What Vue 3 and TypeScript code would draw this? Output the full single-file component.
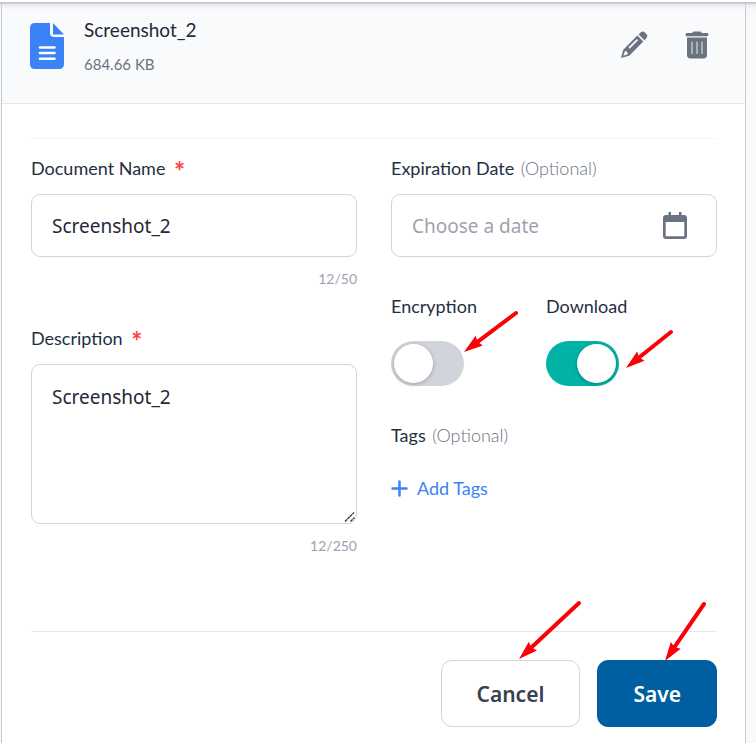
<script setup lang="ts">
import { computed, ref } from 'vue'

interface Arrow {
  from: [number, number]
  to: [number, number]
}

const fileName = 'Screenshot_2'
const fileSize = '684.66 KB'
const documentName = ref(fileName)
const description = ref(fileName)
const expiration = ref('')
const encryption = ref(false)
const download = ref(true)

const arrows: Arrow[] = [
  { from: [516, 313], to: [464, 352] },
  { from: [671, 332], to: [626, 368] },
  { from: [579, 603], to: [519, 659] },
  { from: [704, 604], to: [665, 661] },
]

// Each arrow is drawn pointing left from its tip, then rotated into place.
const drawnArrows = computed(() =>
  arrows.map(({ from, to }) => {
    const dx = from[0] - to[0]
    const dy = from[1] - to[1]
    return {
      length: Math.hypot(dx, dy),
      transform: `translate(${to[0]} ${to[1]}) rotate(${(Math.atan2(dy, dx) * 180) / Math.PI})`,
    }
  }),
)
</script>

<template>
  <div class="page">
    <form class="card" @submit.prevent>
      <header class="file">
        <svg class="file-icon" viewBox="0 0 34 46" aria-hidden="true">
          <path fill="#3b82f6" d="M5 0H20V10Q20 14 24 14H34V41Q34 46 29 46H5Q0 46 0 41V5Q0 0 5 0Z" />
          <path fill="#3b82f6" d="M23 0L34 11.500H23Z" />
          <path stroke="#fff" stroke-width="2.600" stroke-linecap="round" d="M10 24.500H24.500M10 30H24.500M10 35.700H24.500" />
        </svg>
        <div class="file-text">
          <h1>{{ fileName }}</h1>
          <p>{{ fileSize }}</p>
        </div>
        <button type="button" class="icon-button" aria-label="Edit">
          <svg width="28" height="28" viewBox="0 0 28 28" aria-hidden="true">
            <path fill="#6b7280" d="M18.600 3.400L20.600 1.500Q22.800 -.4 25 1.600L26.300 2.900Q28.300 5.100 26.300 7.300L24.500 9.200ZM17.300 4.600L23.300 10.600L10 23.900Q9.200 24.700 8.100 25L1 27L2.900 19.900Q3.200 18.800 4 18Z" />
            <path fill="#f9fafb" d="M3.400 24.700L4.900 20.200L6.800 20.600L7.200 21.200L7.900 23.300Z" />
            <path stroke="#f9fafb" stroke-width="1.800" stroke-linecap="round" d="M9.500 16.600L17 9.200" />
          </svg>
        </button>
        <button type="button" class="icon-button" aria-label="Delete">
          <svg width="24" height="28" viewBox="0 0 24 28" aria-hidden="true">
            <path fill="#6b7280" d="M7.500 1.400Q8 .5 9 .5H15Q16 .5 16.500 1.400L17 2H22Q23.500 2 23.500 3.600T22 5.300H2Q.5 5.300 .5 3.700T2 2H7ZM2 6.500H22V23.700Q22 27.500 18.500 27.500H5.500Q2 27.500 2 23.700Z" />
            <path stroke="#d5d8dd" stroke-width="1.200" stroke-linecap="round" d="M7 11V22.500M12 11V22.500M17 11V22.500" />
          </svg>
        </button>
      </header>

      <div class="body">
        <div class="columns">
          <div class="column">
            <div>
              <label class="label" for="name">Document Name <span class="required">*</span></label>
              <input id="name" v-model="documentName" class="control" type="text" maxlength="50" />
              <p class="counter">{{ documentName.length }}/50</p>
            </div>
            <div>
              <label class="label" for="description">Description <span class="required">*</span></label>
              <div class="area">
                <textarea id="description" v-model="description" class="control" maxlength="250"></textarea>
                <svg class="grip" viewBox="0 0 12 12" aria-hidden="true">
                  <path stroke="#444" stroke-width="1.500" stroke-dasharray="3 .5" d="M1 10.500L10 1.500M6.500 10.500L10.500 6.500" />
                </svg>
              </div>
              <p class="counter">{{ description.length }}/250</p>
            </div>
          </div>

          <div class="column">
            <div>
              <label class="label" for="expiration">Expiration Date <span class="optional">(Optional)</span></label>
              <div class="control date">
                <input id="expiration" v-model="expiration" type="text" placeholder="Choose a date" />
                <button type="button" aria-label="Open calendar">
                  <svg width="24" height="27" viewBox="0 0 24 27" aria-hidden="true">
                    <path fill="#6b7280" fill-rule="evenodd" d="M5.500 0H8V3H16V0H18.500V3H21Q24 3 24 6V24Q24 27 21 27H3Q0 27 0 24V6Q0 3 3 3H5.500ZM2.700 10V24.300H21.300V10Z" />
                  </svg>
                </button>
              </div>
            </div>
            <div class="switches">
              <div>
                <label class="label" for="encryption">Encryption</label>
                <input id="encryption" v-model="encryption" class="switch" type="checkbox" role="switch" />
              </div>
              <div>
                <label class="label" for="download">Download</label>
                <input id="download" v-model="download" class="switch" type="checkbox" role="switch" />
              </div>
            </div>
            <div>
              <h2 class="label">Tags <span class="optional">(Optional)</span></h2>
              <button type="button" class="add">
                <svg width="17" height="17" viewBox="0 0 17 17" aria-hidden="true">
                  <path stroke="#3b82f6" stroke-width="2.500" stroke-linecap="round" d="M8.500 1.500V15.500M1.500 8.500H15.500" />
                </svg>
                Add Tags
              </button>
            </div>
          </div>
        </div>

        <footer class="actions">
          <button type="button" class="button">Cancel</button>
          <button type="submit" class="button primary">Save</button>
        </footer>
      </div>
    </form>

    <svg class="arrows" width="756" height="743" aria-hidden="true">
      <g v-for="(arrow, i) in drawnArrows" :key="i" :transform="arrow.transform">
        <line x1="14" y1="0" :x2="arrow.length" y2="0" stroke="#fb0007" stroke-width="4" stroke-linecap="round" />
        <path fill="#fb0007" d="M0 0L19 -6L17 0L19 6Z" />
      </g>
    </svg>
  </div>
</template>

<style>
body {
  margin: 0;
  background: #f9f9fa;
}
</style>

<style scoped>
.page {
  position: relative;
  box-sizing: border-box;
  min-height: 100vh;
  overflow: hidden;
  padding: 2px 10px 0 1px;
  background: #f9f9fa;
  font-family: Lato, "Liberation Sans", sans-serif;
  font-size: 18px;
  color: #1f2937;
}

/* Shadow cast by the edge above the card */
.page::before {
  content: "";
  position: absolute;
  inset: 0 0 auto;
  height: 10px;
  background: linear-gradient(#fff 2px, #babcc0 2px, rgba(220, 222, 226, 0.5) 5px, rgba(249, 250, 251, 0));
}

.card {
  box-sizing: border-box;
  min-height: calc(100vh - 2px);
  border: solid #c6ccd5;
  border-width: 0 1px;
  background: #fff;
}

h1,
h2,
p {
  margin: 0;
  font-weight: 400;
}

button {
  padding: 0;
  border: 0;
  background: none;
  font: inherit;
  cursor: pointer;
}

svg {
  display: block;
  fill: none;
}

.file {
  display: flex;
  align-items: flex-start;
  padding: 14px 36px 25px 28px;
  border-bottom: 1px solid #e2e5ea;
  background: #f9fafc;
}

.file-icon {
  width: 34px;
  height: 46px;
  margin-top: 7px;
}

.file-text {
  flex: 1;
  margin-left: 20px;
}

.file-text h1 {
  font-size: 19px;
  line-height: 28px;
}

.file-text p {
  margin-top: 7px;
  font-size: 15px;
  line-height: 27px;
  color: #6b7280;
}

.icon-button {
  margin: 15px 0 0 37px;
}

.body {
  padding: 34px 28px 17px 29px;
}

.columns {
  display: grid;
  grid-template-columns: repeat(2, minmax(0, 1fr));
  gap: 34px;
  padding: 15px 0 75px;
  border-top: 1px solid #f5f6f7;
}

.column {
  display: flex;
  flex-direction: column;
  gap: 35px;
}

.label {
  display: block;
  margin-bottom: 12px;
  font-size: 18px;
  line-height: 28px;
  color: #1f2f42;
}

.required {
  margin-left: 4px;
  font-size: 26px;
  font-weight: 700;
  line-height: 0;
  vertical-align: -6px;
  color: #ff4040;
}

.optional {
  margin-left: 2px;
  font-weight: 300;
  color: #6b7280;
}

.control {
  display: block;
  box-sizing: border-box;
  width: 100%;
  height: 63px;
  padding: 0 20px;
  border: 1px solid #d1d5db;
  border-radius: 9px;
  background: #fff;
  font-family: "Noto Sans", "Open Sans", sans-serif;
  font-size: 19px;
  color: #1f2937;
}

.area {
  position: relative;
}

textarea.control {
  height: 160px;
  padding: 18px 20px;
  line-height: 28px;
  resize: none;
}

.grip {
  position: absolute;
  right: 1px;
  bottom: 1px;
  width: 12px;
  height: 12px;
}

.counter {
  margin-top: 12px;
  font-size: 14px;
  line-height: 20px;
  text-align: right;
  color: #9ca3af;
}

.date {
  display: flex;
  align-items: center;
  padding-right: 29px;
}

.date input {
  flex: 1;
  min-width: 0;
  padding: 0;
  border: 0;
  outline: 0;
  background: none;
  font: inherit;
  color: inherit;
}

.date input::placeholder {
  color: #9ca3af;
}

.switches {
  display: grid;
  grid-template-columns: 155px 1fr;
}

.switches .label {
  margin-bottom: 21px;
}

.switch {
  display: block;
  appearance: none;
  box-sizing: border-box;
  width: 73px;
  height: 45px;
  margin: 0;
  padding: 3px;
  border-radius: 23px;
  background: #d1d5db;
  cursor: pointer;
}

.switch::before {
  content: "";
  display: block;
  width: 39px;
  height: 39px;
  border-radius: 50%;
  background: #fff;
  box-shadow: 0 1px 4px rgba(0, 0, 0, 0.25);
}

.switch:checked {
  background: #00b3a6;
}

.switch:checked::before {
  margin-left: auto;
}

h2.label {
  margin-bottom: 25px;
}

.add {
  display: flex;
  align-items: center;
  gap: 9px;
  line-height: 28px;
  color: #3b82f6;
}

.actions {
  display: flex;
  justify-content: flex-end;
  gap: 17px;
  padding-top: 28px;
  border-top: 1px solid #e5e7eb;
}

.button {
  padding: 2px 35px 0;
  border: 1px solid #d1d5db;
  border-radius: 11px;
  background: #fff;
  font-family: "Noto Sans", "Open Sans", sans-serif;
  font-size: 21px;
  font-weight: 600;
  line-height: 63px;
  color: #374151;
}

.primary {
  border-color: #005fa0;
  background: #005fa0;
  color: #fff;
}

.arrows {
  position: absolute;
  top: 0;
  left: 0;
  pointer-events: none;
}
</style>
